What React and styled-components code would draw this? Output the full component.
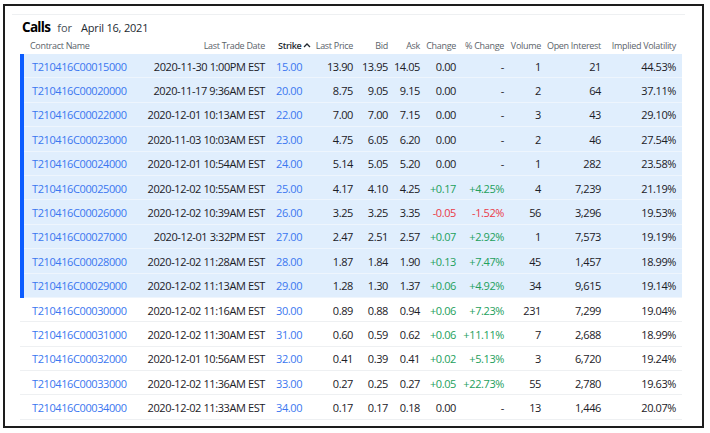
import styled, { createGlobalStyle } from "styled-components";

const GlobalStyle = createGlobalStyle`
  html, body {
    margin: 0;
    padding: 0;
    background: #fff;
  }
  body {
    font-family: "Open Sans", "Noto Sans", sans-serif;
    color: #232a31;
  }
`

const Frame = styled.div`
  box-sizing: border-box;
  width: 701px;
  height: 424px;
  margin: 4px 6px 5px 3px;
  border: 2px solid #1d1d1d;
  padding: 8px 0 0 7px;
  overflow: hidden;
`
const Panel = styled.section`
  width: 673px;
  border-top: 1px solid #eef0f2;
  padding-left: 10px;
  box-sizing: border-box;
`
const Heading = styled.div`
  display: flex;
  align-items: baseline;
  padding-top: 3px;
  height: 18px;
  line-height: 18px;
`
const Title = styled.span`
  font-size: 13.5px;
  font-weight: 700;
  letter-spacing: -0.7px;
  color: #000;
  margin-right: 7px;
`
const For = styled.span`
  font-size: 11px;
  color: #464e56;
  margin-right: 9px;
`
const DateLabel = styled.span`
  font-size: 11px;
  letter-spacing: -0.2px;
  color: #232a31;
`
const Table = styled.div`
  margin-left: -2px;
  width: 662px;
`
const cols = "116px 125px 53px 35px 35px 32px 36px 48px 37px 60px 75px";

const HeadRow = styled.div`
  display: grid;
  grid-template-columns: ${cols};
  padding-right: 6px;
  border-left: 4px solid transparent;
  height: 18px;
  align-items: center;
  font-size: 9px;
  color: #5b636a;
  letter-spacing: -0.3px;
`
const Row = styled.div`
  display: grid;
  grid-template-columns: ${cols};
  padding-right: 6px;
  box-sizing: border-box;
  height: 24.4px;
  align-items: center;
  font-size: 11px;
  font-weight: 500;
  letter-spacing: -0.4px;
  color: #1b2026;
  border-left: 4px solid ${p => (p.$itm ? "#0b5cff" : "transparent")};
  background: linear-gradient(
    to top,
    ${p => (p.$itm ? "#eef5fd" : "#eef0f2")} 1px,
    ${p => (p.$itm ? "#e0eefd" : "#fff")} 1px
  );
`
const Cell = styled.div`
  white-space: nowrap;
  text-align: ${p => (p.$left ? "left" : "right")};
  padding-left: ${p => (p.$left ? `${p.$pad ?? 8}px` : "0")};
  color: ${p => p.$color || "inherit"};
`
const HeadCell = styled(Cell)`
  color: ${p => (p.$active ? "#232a31" : "#5b636a")};
  font-weight: ${p => (p.$active ? 600 : 400)};
  display: flex;
  align-items: center;
  justify-content: ${p => (p.$left ? "flex-start" : "flex-end")};
`
const Caret = styled.svg`
  margin-left: 2px;
`

const BLUE = "#3b77f0";
const GREEN = "#23a05c";
const RED = "#ea3a48";

const rows = [
  ["T210416C00015000", "2020-11-30 1:00PM EST", "15.00", "13.90", "13.95", "14.05", "0.00", "-", "1", "21", "44.53%"],
  ["T210416C00020000", "2020-11-17 9:36AM EST", "20.00", "8.75", "9.05", "9.15", "0.00", "-", "2", "64", "37.11%"],
  ["T210416C00022000", "2020-12-01 10:13AM EST", "22.00", "7.00", "7.00", "7.15", "0.00", "-", "3", "43", "29.10%"],
  ["T210416C00023000", "2020-11-03 10:03AM EST", "23.00", "4.75", "6.05", "6.20", "0.00", "-", "2", "46", "27.54%"],
  ["T210416C00024000", "2020-12-01 10:54AM EST", "24.00", "5.14", "5.05", "5.20", "0.00", "-", "1", "282", "23.58%"],
  ["T210416C00025000", "2020-12-02 10:55AM EST", "25.00", "4.17", "4.10", "4.25", "+0.17", "+4.25%", "4", "7,239", "21.19%"],
  ["T210416C00026000", "2020-12-02 10:39AM EST", "26.00", "3.25", "3.25", "3.35", "-0.05", "-1.52%", "56", "3,296", "19.53%"],
  ["T210416C00027000", "2020-12-01 3:32PM EST", "27.00", "2.47", "2.51", "2.57", "+0.07", "+2.92%", "1", "7,573", "19.19%"],
  ["T210416C00028000", "2020-12-02 11:28AM EST", "28.00", "1.87", "1.84", "1.90", "+0.13", "+7.47%", "45", "1,457", "18.99%"],
  ["T210416C00029000", "2020-12-02 11:13AM EST", "29.00", "1.28", "1.30", "1.37", "+0.06", "+4.92%", "34", "9,615", "19.14%"],
  ["T210416C00030000", "2020-12-02 11:16AM EST", "30.00", "0.89", "0.88", "0.94", "+0.06", "+7.23%", "231", "7,299", "19.04%"],
  ["T210416C00031000", "2020-12-02 11:30AM EST", "31.00", "0.60", "0.59", "0.62", "+0.06", "+11.11%", "7", "2,688", "18.99%"],
  ["T210416C00032000", "2020-12-01 10:56AM EST", "32.00", "0.41", "0.39", "0.41", "+0.02", "+5.13%", "3", "6,720", "19.24%"],
  ["T210416C00033000", "2020-12-02 11:36AM EST", "33.00", "0.27", "0.25", "0.27", "+0.05", "+22.73%", "55", "2,780", "19.63%"],
  ["T210416C00034000", "2020-12-02 11:33AM EST", "34.00", "0.17", "0.17", "0.18", "0.00", "-", "13", "1,446", "20.07%"],
];

const changeColor = v => (v.startsWith("+") ? GREEN : v.startsWith("-") && v !== "-" ? RED : undefined);

const App = () => {
  return (
    <>
      <GlobalStyle />
      <Frame>
        <Panel>
          <Heading>
            <Title>Calls</Title>
            <For>for</For>
            <DateLabel>April 16, 2021</DateLabel>
          </Heading>
          <Table>
            <HeadRow>
              <HeadCell $left $pad={6}>Contract Name</HeadCell>
              <HeadCell>Last Trade Date</HeadCell>
              <HeadCell $left $pad={13} $active>
                Strike
                <Caret width="8" height="6" viewBox="0 0 8 6">
                  <path d="M1 5 L4 2 L7 5" fill="none" stroke="#232a31" strokeWidth="1.3" />
                </Caret>
              </HeadCell>
              <HeadCell>Last Price</HeadCell>
              <HeadCell>Bid</HeadCell>
              <HeadCell>Ask</HeadCell>
              <HeadCell>Change</HeadCell>
              <HeadCell>% Change</HeadCell>
              <HeadCell>Volume</HeadCell>
              <HeadCell>Open Interest</HeadCell>
              <HeadCell>Implied Volatility</HeadCell>
            </HeadRow>
            {rows.map((r, i) => (
              <Row key={r[0]} $itm={i < 10}>
                <Cell $left $color={BLUE}>{r[0]}</Cell>
                <Cell>{r[1]}</Cell>
                <Cell $left $pad={11} $color={BLUE}>{r[2]}</Cell>
                <Cell>{r[3]}</Cell>
                <Cell>{r[4]}</Cell>
                <Cell>{r[5]}</Cell>
                <Cell $color={changeColor(r[6])}>{r[6]}</Cell>
                <Cell $color={changeColor(r[7])}>{r[7]}</Cell>
                <Cell>{r[8]}</Cell>
                <Cell>{r[9]}</Cell>
                <Cell>{r[10]}</Cell>
              </Row>
            ))}
          </Table>
        </Panel>
      </Frame>
    </>
  )
}

export default App;
